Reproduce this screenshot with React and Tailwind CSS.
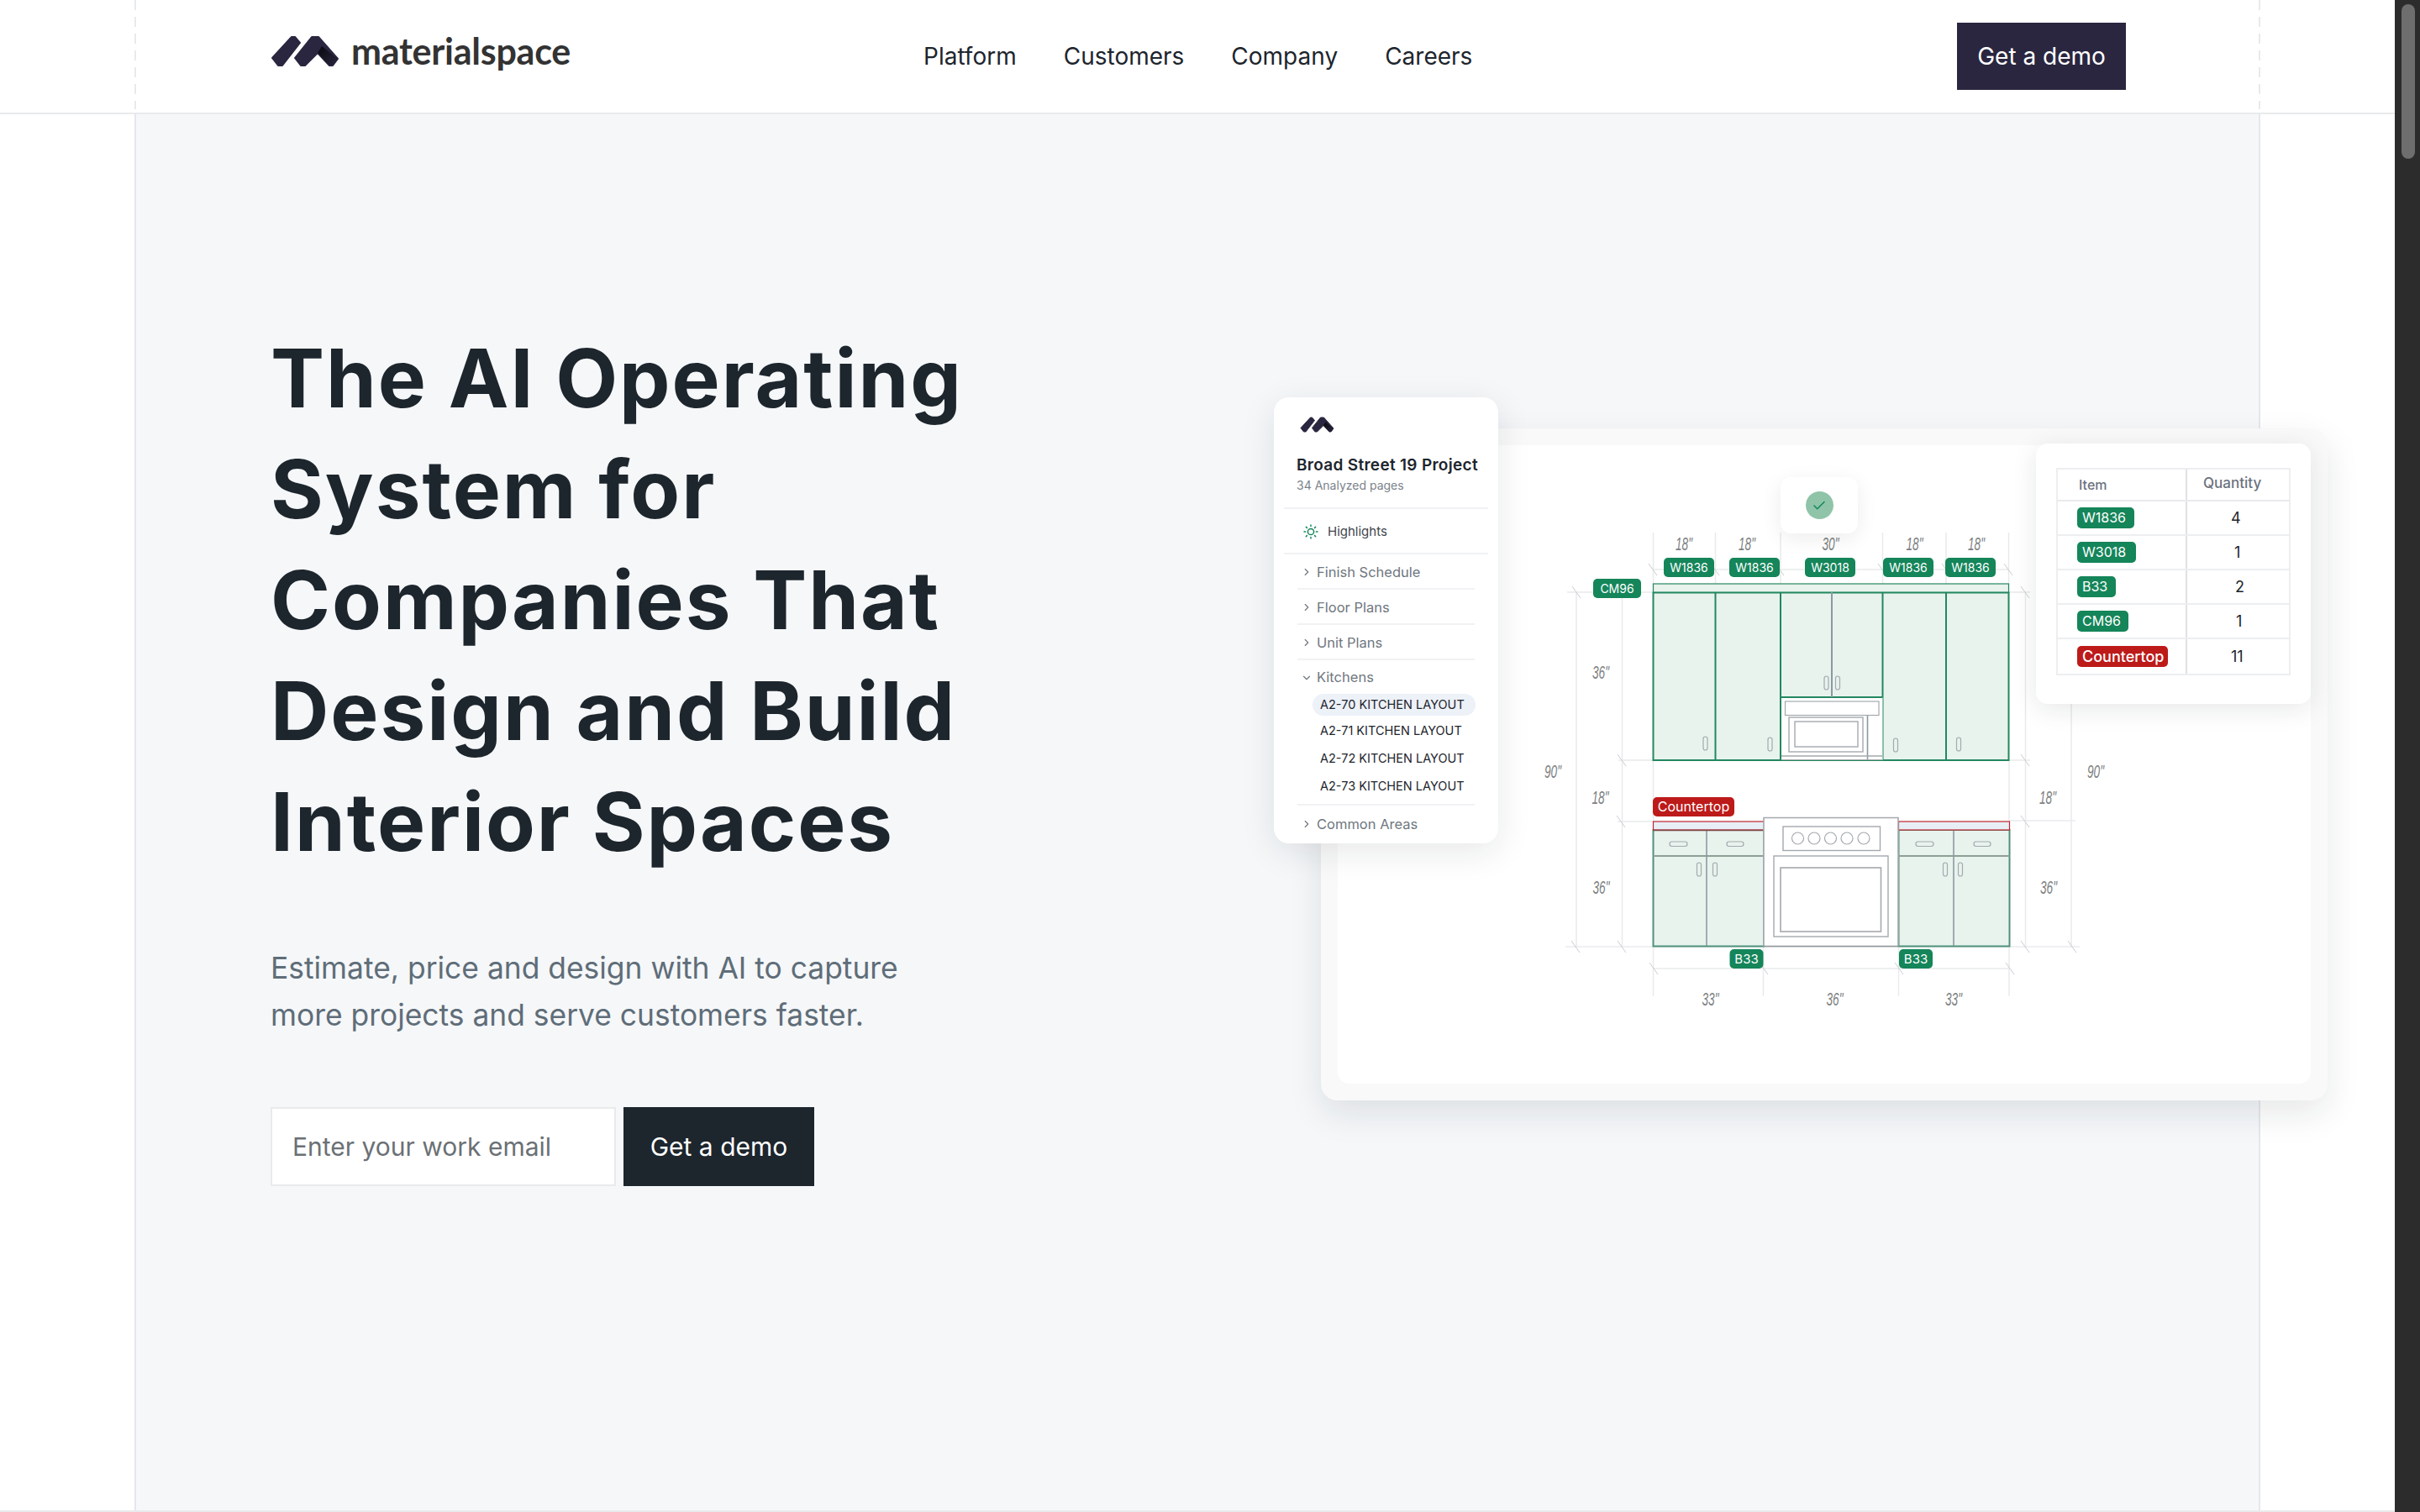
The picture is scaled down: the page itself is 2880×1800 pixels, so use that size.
import React from 'react';
import { ChevronRight, ChevronDown, Check } from 'lucide-react';

// Logo mark - two slanted bars, the right one folds into an M
function LogoMark({ className }) {
    return (
        <svg viewBox="0 0 82 38" className={className}>
            <defs>
                <linearGradient id="fold" x1="0" y1="0" x2="1" y2="1">
                    <stop offset="0" stopColor="#08080c" />
                    <stop offset="1" stopColor="#2a2640" />
                </linearGradient>
            </defs>
            <path d="M25 2h4l6 7-21 27h-5l-7-9z" fill="#2a2640" stroke="#2a2640" strokeWidth="2" strokeLinejoin="round" />
            <path d="M49 2h8l23 26-6 8h-4l-14-15-15 15h-5l-7-9z" fill="#2a2640" stroke="#2a2640" strokeWidth="2" strokeLinejoin="round" />
            <path d="M56 21l5-8 19 15-6 8h-4z" fill="url(#fold)" />
        </svg>
    );
}

function DashedRule() {
    return <div className="w-[2px] h-[130px] shrink-0 bg-[repeating-linear-gradient(to_bottom,#e8eaec_0_12px,transparent_12px_20px)]"></div>;
}

function Header() {
    return (
        <header className="h-[136px] border-b-2 border-[#e8eaec] bg-white">
            <div className="ml-[160px] w-[2530px] h-[134px] flex">
                <DashedRule />
                <div className="flex-1 pl-[160px] flex items-start">
                    <div className="flex items-center gap-[14px] w-[777px] pt-[42px]">
                        <LogoMark className="w-[82px] h-[38px]" />
                        <span className="font-['Lato'] font-bold text-[43px] leading-[38px] tracking-[-0.25px] text-[#333333]">materialspace</span>
                    </div>
                    <nav className="flex gap-[56px] pt-[47px] font-['Inter'] text-[28px] leading-[40px] text-[#1d252d]">
                        <span>Platform</span>
                        <span>Customers</span>
                        <span>Company</span>
                        <span>Careers</span>
                    </nav>
                    <button className="ml-auto mr-[158px] mt-[27px] w-[201px] h-[80px] bg-[#2a2640] text-white font-['Inter'] text-[28px]">Get a demo</button>
                </div>
                <DashedRule />
            </div>
        </header>
    );
}

function HeroText() {
    return (
        <div className="w-[1356px] shrink-0 pl-[162px] pt-[248px]">
            <h1 className="max-w-[900px] font-['Inter'] font-bold text-[96px] leading-[132px] tracking-[2px] text-[#1d252d]">
                The AI Operating System for Companies That Design and Build Interior Spaces
            </h1>
            <p className="mt-[81px] w-[780px] font-['Inter'] text-[35.4px] leading-[56px] text-[#5f6d78]">
                Estimate, price and design with AI to capture more projects and serve customers faster.
            </p>
            <div className="mt-[81px] flex gap-[9px]">
                <div className="w-[411px] h-[94px] bg-white border-2 border-[#e8eaec] pl-[24px] flex items-center font-['Inter'] text-[30px] text-[#6b7075]">
                    Enter your work email
                </div>
                <button className="w-[227px] h-[94px] bg-[#1d252d] text-white font-['Inter'] text-[30px]">Get a demo</button>
            </div>
        </div>
    );
}

function SunIcon() {
    return (
        <svg viewBox="0 0 18 18" className="w-[18px] h-[18px]" fill="none" stroke="#15855a" strokeWidth="1.5" strokeLinecap="round">
            <circle cx="9" cy="9" r="3.6" />
            <path d="M9 1v1.6M9 15.4V17M1 9h1.6M15.4 9H17M3.3 3.3l1.1 1.1M13.6 13.6l1.1 1.1M3.3 14.7l1.1-1.1M13.6 4.4l1.1-1.1" />
        </svg>
    );
}

const rowBase = "flex items-center border-b-2 border-[#f1f2f4] mx-[28px] text-[#6f7780] h-[42px] pt-[2px] text-[16.5px] gap-[5px] pl-[4px]";

// Side panel with the project tree
function ProjectPanel() {
    return (
        <div className="absolute left-0 top-0 w-[267px] h-[531px] bg-white rounded-[18px] shadow-[0_10px_40px_rgba(20,30,40,0.10)] font-['Inter'] z-10">
            <div className="pl-[31px] pt-[23px] h-[131px]">
                <LogoMark className="w-[41px] h-[19px]" />
                <div className="mt-[26px] -ml-[4px] text-[19px] leading-[26px] font-semibold tracking-[0.3px] text-[#1d252d] whitespace-nowrap">Broad Street 19 Project</div>
                <div className="mt-[1px] -ml-[4px] text-[14px] leading-[20px] text-[#7b838b]">34 Analyzed pages</div>
            </div>
            <div className="mx-[12px] h-[56px] pt-[2px] border-y-2 border-[#f1f2f4] flex items-center pl-[23px] gap-[11px] text-[15px] text-[#3f474e]">
                <SunIcon />
                Highlights
            </div>
            <div className={rowBase}><ChevronRight size={14} />Finish Schedule</div>
            <div className={rowBase}><ChevronRight size={14} />Floor Plans</div>
            <div className={rowBase}><ChevronRight size={14} />Unit Plans</div>
            <div className="mx-[28px] border-b-2 border-[#f1f2f4] h-[173px] text-[#6f7780]">
                <div className="h-[41px] flex items-center gap-[5px] pl-[4px] text-[16.5px]"><ChevronDown size={14} />Kitchens</div>
                <div className="ml-[18px] text-[14.5px] text-[#1d252d] whitespace-nowrap">
                    <div className="h-[26px] -mt-[1px] w-[194px] pl-[9px] rounded-full bg-[#edf1f8] flex items-center">A2-70 KITCHEN LAYOUT</div>
                    <div className="h-[34px] pt-[2px] pl-[9px] flex items-center">A2-71 KITCHEN LAYOUT</div>
                    <div className="h-[32px] pt-[2px] pl-[9px] flex items-center">A2-72 KITCHEN LAYOUT</div>
                    <div className="h-[33px] pt-[2px] pl-[9px] flex items-center">A2-73 KITCHEN LAYOUT</div>
                </div>
            </div>
            <div className="mx-[28px] h-[44px] flex items-center gap-[5px] pl-[4px] text-[16.5px] text-[#6f7780]"><ChevronRight size={14} />Common Areas</div>
        </div>
    );
}

const takeoff = [
    { tag: 'W1836', qty: '4', w: 'w-[68px]', bg: 'bg-[#15855a]', qx: 'pl-[52px]', size: 'text-[16px]' },
    { tag: 'W3018', qty: '1', w: 'w-[70px]', bg: 'bg-[#15855a]', qx: 'pl-[56px]', size: 'text-[16px]' },
    { tag: 'B33', qty: '2', w: 'w-[46px]', bg: 'bg-[#15855a]', qx: 'pl-[57px]', size: 'text-[16px]' },
    { tag: 'CM96', qty: '1', w: 'w-[61px]', bg: 'bg-[#15855a]', qx: 'pl-[58px]', size: 'text-[16px]' },
    { tag: 'Countertop', qty: '11', w: 'w-[108px]', bg: 'bg-[#bd1a1a]', qx: 'pl-[52px]', size: 'text-[18px] font-medium' },
];

// Floating quantity table
function TakeoffTable() {
    return (
        <div className="absolute left-[907px] top-[55px] w-[327px] h-[310px] bg-white rounded-[14px] shadow-[0_6px_30px_rgba(20,30,40,0.10)] pl-[24px] pt-[29px] font-['Inter'] z-10">
            <div className="w-[279px] border-2 border-[#eceef0]">
                <div className="flex h-[38px] border-b-2 border-[#e8eaec] font-medium text-[#6b7280]">
                    <div className="w-[154px] border-r-2 border-[#dfe1e4] pl-[25px] flex items-center text-[16px]">Item</div>
                    <div className="pl-[19px] flex items-center -mt-[2px] text-[17px]">Quantity</div>
                </div>
                {takeoff.map((row, i) => (
                    <div key={i} className={"flex h-[41px] " + (i < 4 ? "border-b-2 border-[#eceef0]" : "")}>
                        <div className="w-[154px] border-r-2 border-[#dfe1e4] pl-[23px] flex items-center">
                            <span className={row.w + " " + row.bg + " " + row.size + " h-[25px] rounded-[5px] text-white leading-[25px] pl-[6px] whitespace-nowrap"}>{row.tag}</span>
                        </div>
                        <div className={row.qx + " flex items-center text-[18px] text-[#1d252d]"}>{row.qty}</div>
                    </div>
                ))}
            </div>
        </div>
    );
}

const GREEN = '#23875f';
const GRAY = '#a4a9ae';
const DIM = '#e9eaec';

function Dim({ x, y, children }) {
    return (
        <text x={x} y={y + 8} textAnchor="middle" fontFamily="Liberation Sans" fontStyle="italic" fontSize="22" textLength="20" lengthAdjust="spacingAndGlyphs" fill="#7d7f82">{children}</text>
    );
}

function Tag({ x, y, w, size = 14, children, red }) {
    return (
        <g>
            <rect x={x} y={y} width={w} height="23" rx="5" fill={red ? '#bd1a1a' : '#15855a'} />
            <text x={x + w / 2} y={y + 17} textAnchor="middle" fontFamily="Inter" fontSize={size} fill="#fff">{children}</text>
        </g>
    );
}

function Tick({ x, y }) {
    return <line x1={x - 5} y1={y - 7} x2={x + 5} y2={y + 7} stroke="#c9cccf" strokeWidth="1" />;
}

function Handle({ x, y, w = 5, h = 16 }) {
    return <rect x={x - w / 2} y={y} width={w} height={h} rx={Math.min(w, h) / 2} fill="none" stroke={GRAY} strokeWidth="1.2" />;
}

// Kitchen elevation drawing, viewBox is in page pixels
function Elevation() {
    const uppers = [1967.5, 2041.5, 2119, 2240.5, 2316, 2390.5];
    const ext = (x1, y1, x2, y2, key) => <line key={key} x1={x1} y1={y1} x2={x2} y2={y2} stroke={DIM} strokeWidth="1.5" />;
    return (
        <svg viewBox="1592 530 1158 760" className="w-full h-full">
            {/* dimension lines */}
            {uppers.map((x, i) => ext(x, 634, x, 705, 'u' + i))}
            {ext(1967, 678, 2390, 678, 'a')}
            {ext(1865, 705, 2416, 705, 'b')}
            {ext(1926, 905, 2416, 905, 'c')}
            {ext(1876, 705, 1876, 1127, 'd')}
            {ext(1930.5, 705, 1930.5, 1127, 'e')}
            {ext(2410.5, 705, 2410.5, 1127, 'f')}
            {ext(2465, 705, 2465, 1127, 'g')}
            {ext(1967.5, 905, 1967.5, 978, 'h')}
            {ext(2391, 905, 2391, 978, 'i')}
            {ext(1925, 978, 1967, 978, 'j')}
            {ext(2392, 977, 2470, 977, 'k')}
            {ext(1863, 1127, 2475, 1127, 'l')}
            {ext(1967, 1153, 2392, 1153, 'm')}
            {[1967.5, 2098.5, 2259.5, 2391].map((x, i) => ext(x, 1127, x, 1186, 'v' + i))}
            {[[1967, 678], [2041, 678], [2118, 678], [2240, 678], [2316, 678], [2390, 678], [1876, 705], [2410, 705], [1930, 905], [2410, 905], [1929, 978], [2410, 978], [1875, 1127], [1930, 1127], [2410, 1127], [2466, 1127], [1968, 1153], [2099, 1153], [2260, 1153], [2392, 1153]].map(([x, y], i) => <Tick key={i} x={x} y={y} />)}

            {/* upper cabinets */}
            <rect x="1967.5" y="695" width="423" height="10.5" fill="#e8f3ee" stroke={GREEN} strokeWidth="1.2" />
            <rect x="1967.5" y="705.5" width="423" height="199.5" fill="#e8f3ee" stroke={GREEN} strokeWidth="2" />
            <line x1="2041.5" y1="705" x2="2041.5" y2="905" stroke={GREEN} strokeWidth="2" />
            <line x1="2240.5" y1="705" x2="2240.5" y2="905" stroke={GREEN} strokeWidth="2" />
            <line x1="2316" y1="705" x2="2316" y2="905" stroke={GREEN} strokeWidth="2" />
            <rect x="2119" y="830" width="121.5" height="75" fill="#fff" />
            <line x1="2119" y1="705" x2="2119" y2="905" stroke={GREEN} strokeWidth="2" />
            <line x1="2119" y1="830" x2="2240.5" y2="830" stroke={GREEN} strokeWidth="2" />
            <line x1="2180" y1="705" x2="2180" y2="830" stroke="#8d98a1" strokeWidth="2" />
            <Handle x={2173.5} y={805} />
            <Handle x={2187} y={805} />
            <Handle x={2029.5} y={877} />
            <Handle x={2106.5} y={878} />
            <Handle x={2256} y={879} />
            <Handle x={2331} y={878} />

            {/* microwave and hood */}
            <rect x="2124.5" y="835" width="111.5" height="16.5" fill="#fff" stroke={GRAY} strokeWidth="1.2" />
            <rect x="2129" y="854" width="88" height="41" fill="#fff" stroke={GRAY} strokeWidth="1.4" />
            <rect x="2136" y="859" width="75" height="30" fill="#fff" stroke={GRAY} strokeWidth="1.4" />
            <line x1="2222.5" y1="852" x2="2222.5" y2="904" stroke="#8d98a1" strokeWidth="1.6" />
            <line x1="2120" y1="900" x2="2240" y2="900" stroke={GRAY} strokeWidth="1.6" />
            <line x1="2120" y1="904.5" x2="2240" y2="904.5" stroke={GRAY} strokeWidth="1.2" />

            {/* base cabinets */}
            {[[1967.5, 2031, [1987, 2055], [2022, 2041]], [2259.5, 2325, [2280, 2349], [2315, 2333]]].map(([x, mid, dr, door], i) => (
                <g key={i}>
                    <rect x={x} y="988" width="132" height="138.5" fill="#e8f3ee" stroke="#4f927a" strokeWidth="2" />
                    <line x1={mid} y1="988" x2={mid} y2="1126" stroke="#8d98a1" strokeWidth="1.6" />
                    <line x1={x} y1="1019" x2={x + 132} y2="1019" stroke="#8d9f98" strokeWidth="1.8" />
                    <rect x={dr[0]} y="1002" width="21" height="5.5" rx="2.7" fill="none" stroke={GRAY} strokeWidth="1.2" />
                    <rect x={dr[1]} y="1002" width="20" height="5.5" rx="2.7" fill="none" stroke={GRAY} strokeWidth="1.2" />
                    <Handle x={door[0]} y={1027} />
                    <Handle x={door[1]} y={1027} />
                    <rect x={x} y="978" width="132" height="10" fill="#e8eef6" stroke="#c0252e" strokeWidth="1.2" />
                </g>
            ))}
            <line x1="1967" y1="988.5" x2="2099" y2="988.5" stroke="#7a4a44" strokeWidth="1.6" />

            {/* range */}
            <path d="M2099 1126.5V973.5H2259V1126.5" fill="#fff" stroke={GRAY} strokeWidth="1.6" />
            <line x1="2099" y1="1126.5" x2="2259" y2="1126.5" stroke="#8d9399" strokeWidth="1.6" />
            <rect x="2122" y="984" width="115.5" height="28.5" fill="#fff" stroke={GRAY} strokeWidth="1.4" />
            {[2139.5, 2159, 2178.5, 2198, 2218].map((x) => <circle key={x} cx={x} cy="998" r="7" fill="#fff" stroke={GRAY} strokeWidth="1.2" />)}
            <rect x="2111" y="1019" width="136" height="96" fill="#fff" stroke={GRAY} strokeWidth="1.4" />
            <rect x="2119" y="1033" width="119.5" height="76" fill="#fff" stroke={GRAY} strokeWidth="1.6" />

            {/* dimension labels */}
            {[[2004, 647, '18"'], [2079, 647, '18"'], [2178.5, 647, '30"'], [2278.5, 647, '18"'], [2352, 647, '18"'], [1905, 800, '36"'], [1848, 918, '90"'], [2494, 918, '90"'], [1904.5, 949, '18"'], [2437, 949, '18"'], [1905.5, 1056, '36"'], [2438, 1056, '36"'], [2035.5, 1189, '33"'], [2183.5, 1189, '36"'], [2325, 1189, '33"']].map(([x, y, t], i) => <Dim key={i} x={x} y={y}>{t}</Dim>)}

            {/* tags */}
            <Tag x={1980} y={664} w={60}>W1836</Tag>
            <Tag x={2058} y={664} w={60}>W1836</Tag>
            <Tag x={2148} y={664} w={60}>W3018</Tag>
            <Tag x={2241} y={664} w={60}>W1836</Tag>
            <Tag x={2315} y={664} w={60}>W1836</Tag>
            <Tag x={1896} y={689} w={57}>CM96</Tag>
            <Tag x={1967} y={949} w={97} size={16} red>Countertop</Tag>
            <Tag x={2058.5} y={1130} w={40} size={15}>B33</Tag>
            <Tag x={2260} y={1130} w={40} size={15}>B33</Tag>
        </svg>
    );
}

function HeroVisual() {
    return (
        <div className="relative w-[1254px] h-[837px] mt-[337px] shrink-0">
            <div className="ml-[56px] mt-[37px] absolute inset-x-0 bottom-0 top-0 rounded-[20px] bg-[#f9f9f9] p-[20px] shadow-[0_16px_40px_rgba(20,30,40,0.10)]">
                <div className="w-full h-full rounded-[14px] bg-white overflow-hidden">
                    <Elevation />
                </div>
            </div>
            <ProjectPanel />
            <TakeoffTable />
            {/* check badge */}
            <div className="absolute left-[603px] top-[95px] w-[92px] h-[67px] rounded-[12px] bg-white shadow-[0_6px_24px_rgba(20,30,40,0.08)] flex items-center justify-center z-10">
                <div className="w-[33px] h-[33px] rounded-full bg-[#8fc4a9] flex items-center justify-center">
                    <Check size={18} strokeWidth={2} className="text-[#15855a]" />
                </div>
            </div>
        </div>
    );
}

function App() {
    return (
        <div className="w-[2880px] h-[1800px] flex overflow-hidden bg-white">
            <div className="w-[2850px] h-full flex flex-col">
                <Header />
                <main className="flex-1 border-b-2 border-[#e8eaec]">
                    <div className="ml-[160px] w-[2530px] h-full border-x-2 border-[#e5e7eb] bg-[#f5f7f9] flex">
                        <div className="flex -ml-[2px]">
                            <HeroText />
                            <HeroVisual />
                        </div>
                    </div>
                </main>
            </div>
            {/* dark browser scrollbar */}
            <div className="w-[30px] h-full bg-[#2c2c2c] pt-[5px] pl-[8px]">
                <div className="w-[16px] h-[184px] rounded-full bg-[#6e6e6e]"></div>
            </div>
        </div>
    );
}

export default App;
